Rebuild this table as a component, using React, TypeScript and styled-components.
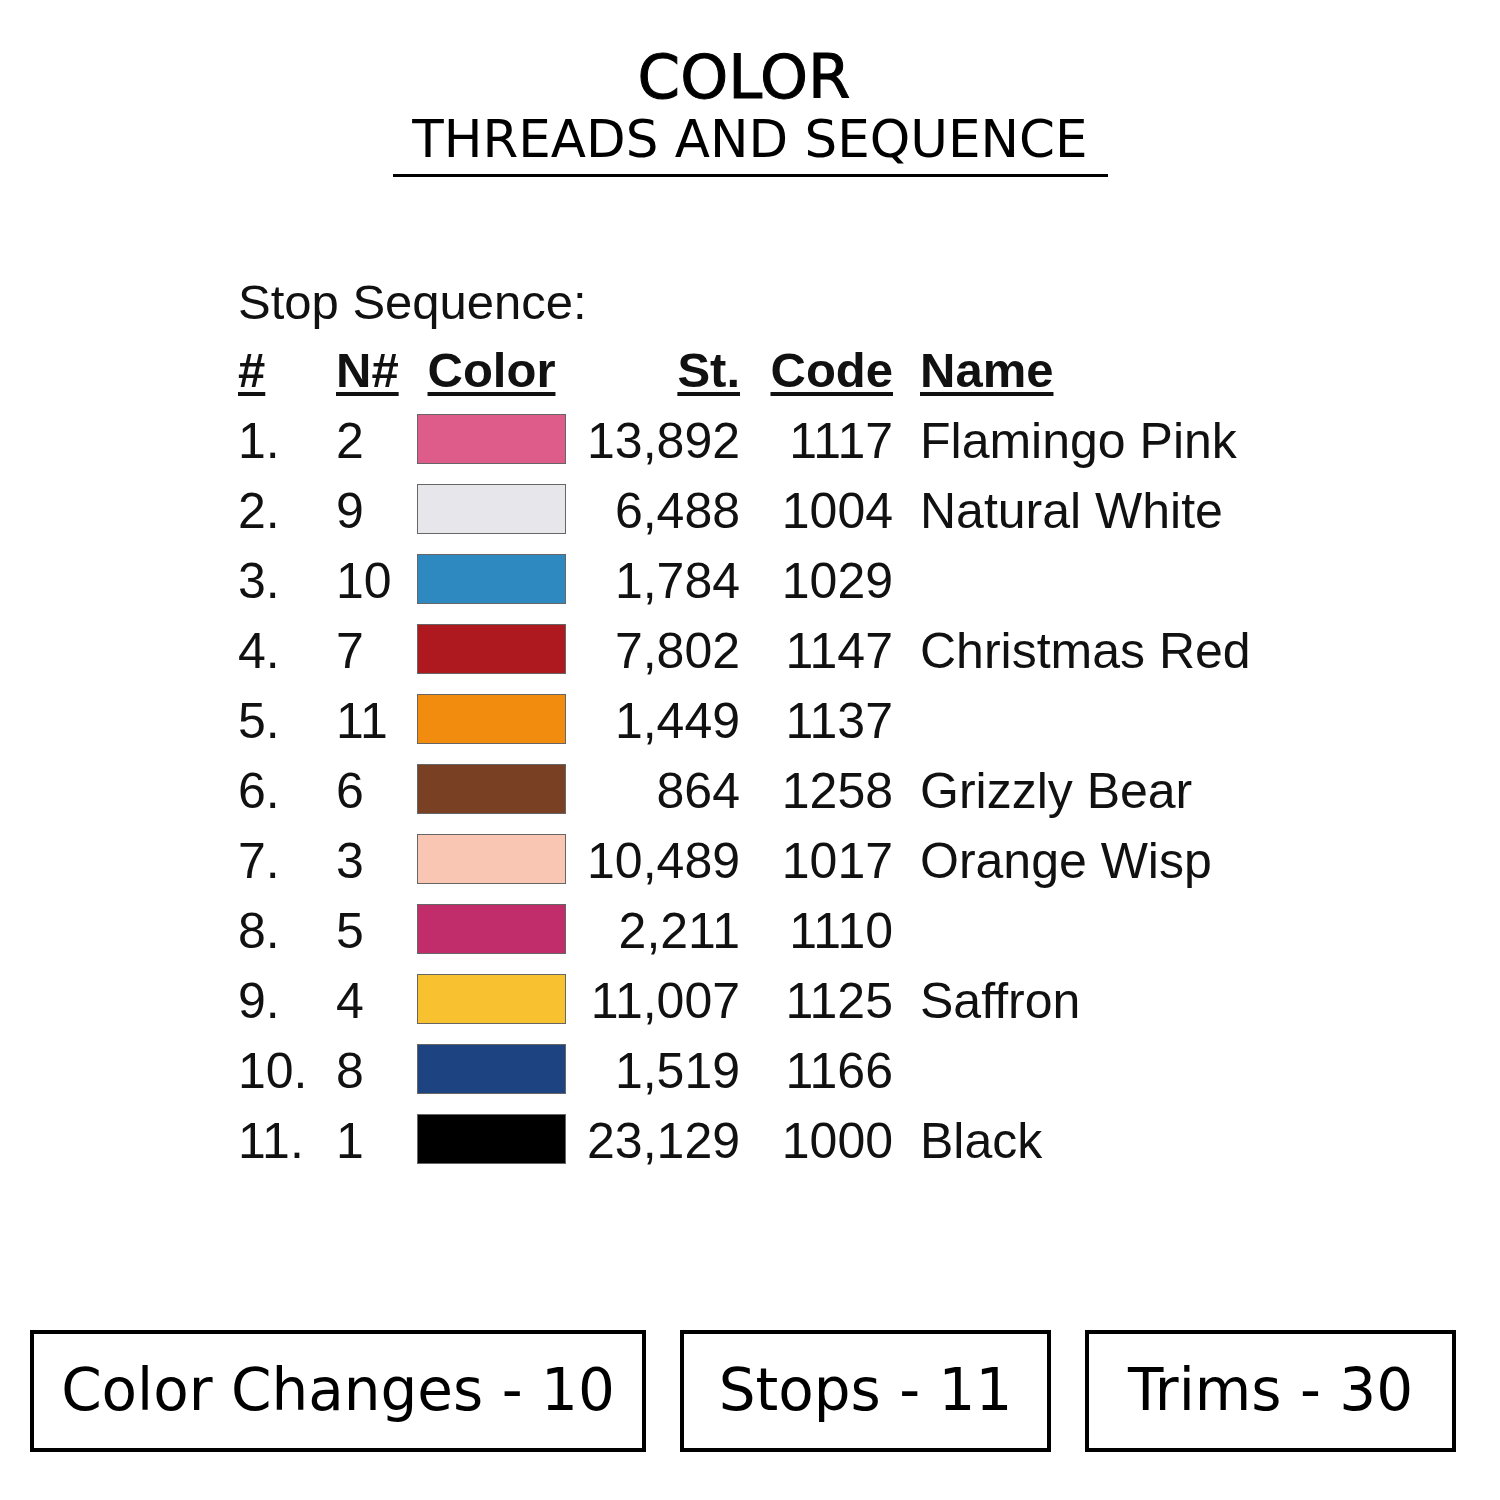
import React from "react";
import styled, { createGlobalStyle } from "styled-components";

const Global = createGlobalStyle`
  html, body { margin: 0; padding: 0; background: #fff; }
  body { width: 1500px; height: 1500px; overflow: hidden; }
`;

const Page = styled.div`
  width: 1500px;
  height: 1500px;
  background: #fff;
  display: flex;
  flex-direction: column;
  align-items: stretch;
  color: #000;
`;

const Header = styled.header`
  display: flex;
  flex-direction: column;
  align-items: center;
  padding-top: 46px;
  font-family: "DejaVu Sans", "Open Sans", sans-serif;
`;

const Title = styled.h1`
  margin: 0;
  font-size: 61px;
  line-height: 61px;
  font-weight: 400;
  -webkit-text-stroke: 1px #000;
  transform: translateX(-6px);
`;

const Subtitle = styled.h2`
  margin: 6px 0 0 0;
  width: 715px;
  text-align: center;
  font-size: 51.5px;
  line-height: 52px;
  font-weight: 400;
  padding-bottom: 9px;
  border-bottom: 3.5px solid #000;
`;

const TableBlock = styled.section`
  margin-top: 95px;
  padding-left: 238px;
  font-family: "Liberation Sans", Arial, sans-serif;
  color: #111;
`;

const Caption = styled.div`
  font-size: 49px;
  line-height: 60px;
  margin-bottom: 4px;
`;

const Grid = styled.div`
  display: grid;
  grid-template-columns: 98px 81px 149px 174px 153px auto;
  grid-auto-rows: 70px;
  font-size: 50px;
  line-height: 70px;
`;

const HeadCell = styled.div<{ $align?: "left" | "right" | "center"; $pad?: number }>`
  font-weight: 700;
  font-size: 49px;
  text-align: ${(p) => p.$align || "left"};
  padding-left: ${(p) => p.$pad || 0}px;
  line-height: 69px;
  height: 69px;
  span {
    text-decoration: underline;
    text-decoration-thickness: 4px;
    text-underline-offset: 5px;
  }
`;

const Cell = styled.div<{ $align?: "left" | "right"; $pad?: number }>`
  text-align: ${(p) => p.$align || "left"};
  padding-left: ${(p) => p.$pad || 0}px;
  white-space: nowrap;
`;

const Swatch = styled.div<{ $c: string }>`
  align-self: center;
  height: 50px;
  margin-bottom: 4px;
  background: ${(p) => p.$c};
  box-sizing: border-box;
  border: 1.5px solid #666;
`;

const Stats = styled.div`
  margin-top: auto;
  margin-bottom: 48px;
  display: flex;
  gap: 34px;
  padding-left: 30px;
  font-family: "DejaVu Sans", "Open Sans", sans-serif;
`;

const StatBox = styled.div<{ $w: number }>`
  width: ${(p) => p.$w}px;
  height: 122px;
  box-sizing: border-box;
  border: 4px solid #000;
  display: flex;
  align-items: center;
  justify-content: center;
  font-size: 58px;
  line-height: 1;
  padding-bottom: 2px;
`;

const rows: [string, string, string, string, string, string][] = [
  ["1.", "2", "#DE5C8A", "13,892", "1117", "Flamingo Pink"],
  ["2.", "9", "#E7E7EB", "6,488", "1004", "Natural White"],
  ["3.", "10", "#2E89C1", "1,784", "1029", ""],
  ["4.", "7", "#AD191F", "7,802", "1147", "Christmas Red"],
  ["5.", "11", "#F28C0F", "1,449", "1137", ""],
  ["6.", "6", "#7A4024", "864", "1258", "Grizzly Bear"],
  ["7.", "3", "#F8C6B3", "10,489", "1017", "Orange Wisp"],
  ["8.", "5", "#C12D6B", "2,211", "1110", ""],
  ["9.", "4", "#F8C130", "11,007", "1125", "Saffron"],
  ["10.", "8", "#1E4381", "1,519", "1166", ""],
  ["11.", "1", "#000000", "23,129", "1000", "Black"],
];

export default function App() {
  return (
    <Page>
      <Global />
      <Header>
        <Title>COLOR</Title>
        <Subtitle>THREADS AND SEQUENCE</Subtitle>
      </Header>
      <TableBlock>
        <Caption>Stop Sequence:</Caption>
        <Grid>
          <HeadCell><span>#</span></HeadCell>
          <HeadCell><span>N#</span></HeadCell>
          <HeadCell $align="center"><span>Color</span></HeadCell>
          <HeadCell $align="right"><span>St.</span></HeadCell>
          <HeadCell $align="right"><span>Code</span></HeadCell>
          <HeadCell $pad={27}><span>Name</span></HeadCell>
          {rows.map((r) => (
            <React.Fragment key={r[0]}>
              <Cell>{r[0]}</Cell>
              <Cell>{r[1]}</Cell>
              <Swatch $c={r[2]} />
              <Cell $align="right">{r[3]}</Cell>
              <Cell $align="right">{r[4]}</Cell>
              <Cell $pad={27}>{r[5]}</Cell>
            </React.Fragment>
          ))}
        </Grid>
      </TableBlock>
      <Stats>
        <StatBox $w={616}>Color Changes - 10</StatBox>
        <StatBox $w={371}>Stops - 11</StatBox>
        <StatBox $w={371}>Trims - 30</StatBox>
      </Stats>
    </Page>
  );
}
